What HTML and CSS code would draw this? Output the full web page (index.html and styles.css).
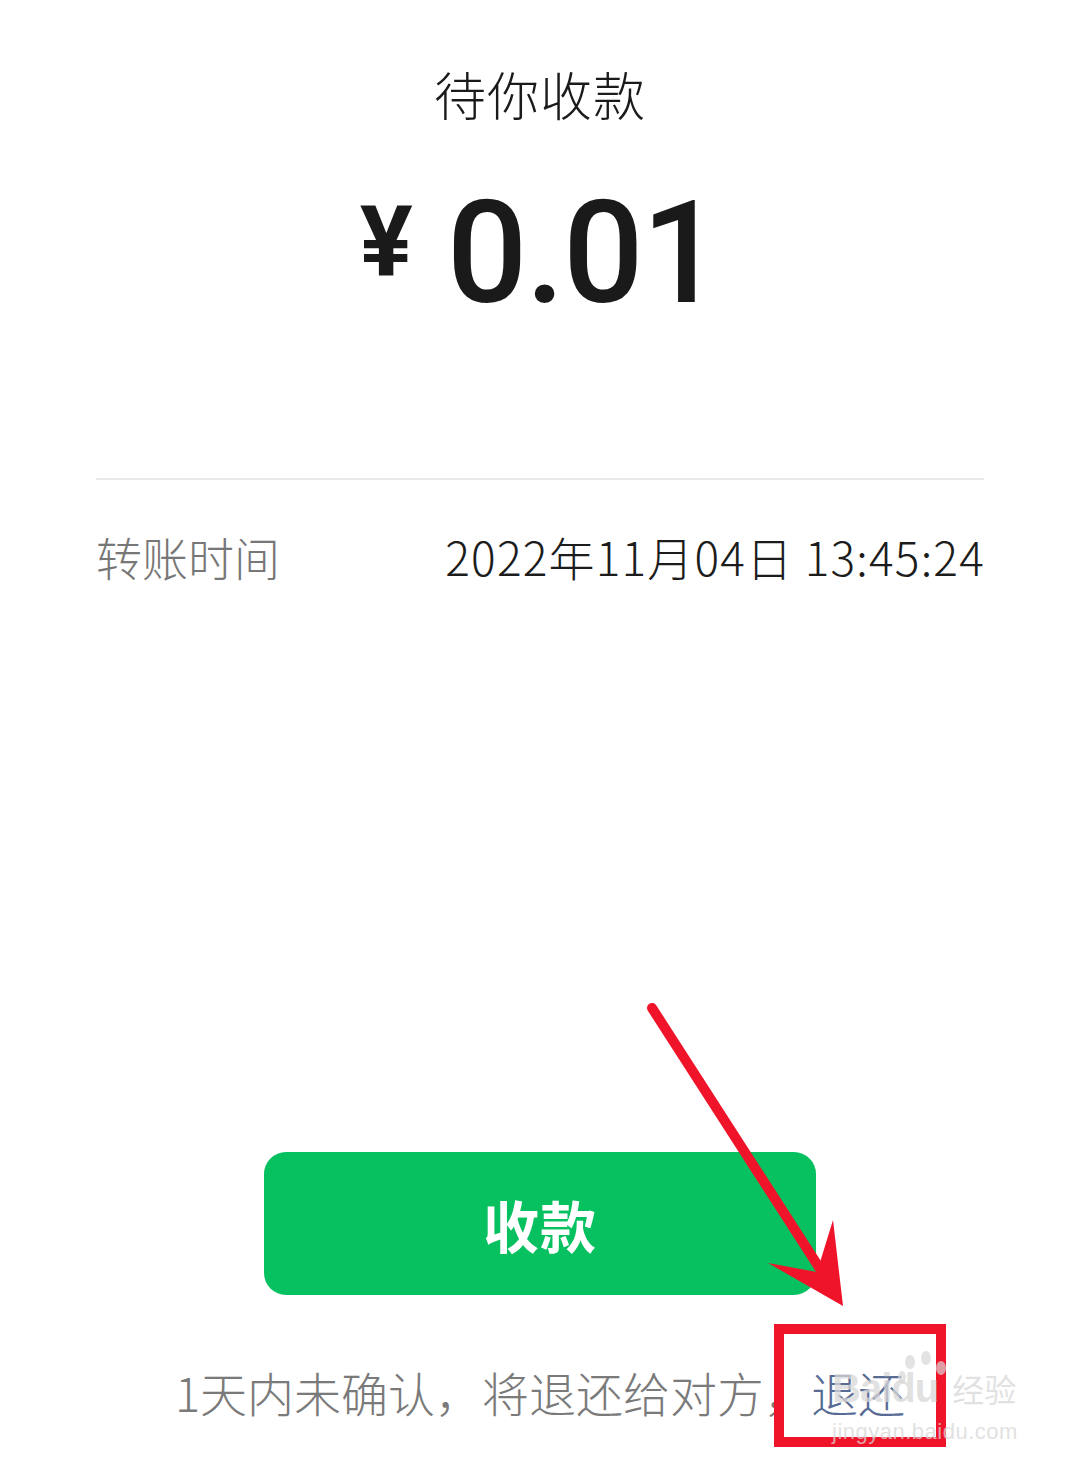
FILE: index.html
```html
<!DOCTYPE html>
<html lang="zh-CN">
<head>
  <meta charset="UTF-8">
  <meta name="viewport" content="width=device-width, initial-scale=1.0">
  <title>待你收款</title>
  <link rel="stylesheet" href="styles.css">
</head>
<body>
  <div id="page">
    <h2 class="title">待你收款</h2>

    <div class="amount">
      <span class="yen">¥</span>
      <span class="num">0.01</span>
    </div>

    <div class="divider"></div>

    <div class="info-row">
      <span class="label">转账时间</span>
      <span class="value">2022年11月04日 13:45:24</span>
    </div>

    <button class="receive-btn">收款</button>

    <p class="tip">1天内未确认，将退还给对方，<a class="back-link">退还</a></p>
  </div>

  <!-- annotation layer -->
  <svg class="marks" width="1080" height="1473" viewBox="0 0 1080 1473">
    <line x1="652" y1="1008" x2="822" y2="1272" stroke="#f0142a" stroke-width="10" stroke-linecap="round"/>
    <polygon points="843,1306 768,1263 817,1272 833,1220" fill="#f0142a"/>
    <rect x="779" y="1329" width="162" height="113" fill="none" stroke="#f0142a" stroke-width="10"/>
    <g fill="rgba(215,215,215,0.7)">
      <ellipse cx="910" cy="1362" rx="5" ry="7"/>
      <ellipse cx="926" cy="1358" rx="5" ry="7"/>
      <ellipse cx="941" cy="1368" rx="5" ry="7"/>
      <ellipse cx="902" cy="1377" rx="4" ry="6"/>
    </g>
  </svg>

  <div class="watermark">
    <span class="wm-logo">Baidu</span><span class="wm-cn">经验</span>
    <div class="wm-url">jingyan.baidu.com</div>
  </div>
</body>
</html>
```

FILE: styles.css
```css
body { margin: 0; background: #fff; font-family: "Noto Sans CJK SC", "Noto Sans", sans-serif; }
#page { width: 1080px; height: 1473px; box-sizing: border-box; padding: 0 96px; display: flex; flex-direction: column; align-items: center; }

.title { margin: 58px 0 0; font-size: 52px; line-height: 72px; font-weight: 300; color: #1a1a1a; letter-spacing: 1px; }

.amount { display: flex; align-items: flex-start; gap: 34px; margin-top: 51px; color: #1a1a1a; }
.yen { font-family: Roboto, sans-serif; font-weight: 700; font-size: 99px; line-height: 1; margin-top: 12px; }
.num { font-family: Roboto, sans-serif; font-weight: 500; font-size: 142px; line-height: 1; letter-spacing: -2px; margin-top: 2px; }

.divider { align-self: stretch; height: 2px; background: #e8e8e8; margin-top: 153px; }

.info-row { align-self: stretch; display: flex; justify-content: space-between; margin-top: 44px; font-size: 46px; line-height: 64px; font-weight: 300; }
.label { color: #777; }
.value { color: #1c1c1c; letter-spacing: 1.2px; margin-right: -1px; }

.receive-btn { margin-top: 564px; width: 552px; height: 143px; border: none; border-radius: 22px; background: #07c160; color: #fff; font-family: "Noto Sans CJK SC", sans-serif; font-size: 56px; font-weight: 700; letter-spacing: 1px; }

.tip { margin: 65px 0 0; font-size: 47px; line-height: 64px; font-weight: 300; color: #7a7a7a; }
.back-link { color: #576b95; }

.marks { position: absolute; left: 0; top: 0; pointer-events: none; }

.watermark { position: absolute; left: 832px; top: 1356px; width: 195px; color: rgba(215,215,215,0.75); font-family: "Liberation Sans", sans-serif; }
.wm-logo { font-size: 40px; line-height: 64px; font-weight: 700; letter-spacing: -1px; }
.wm-cn { font-family: "Noto Sans CJK SC", sans-serif; font-size: 32px; margin-left: 14px; }
.wm-url { font-size: 22px; line-height: 24px; letter-spacing: 0.5px; }
```
